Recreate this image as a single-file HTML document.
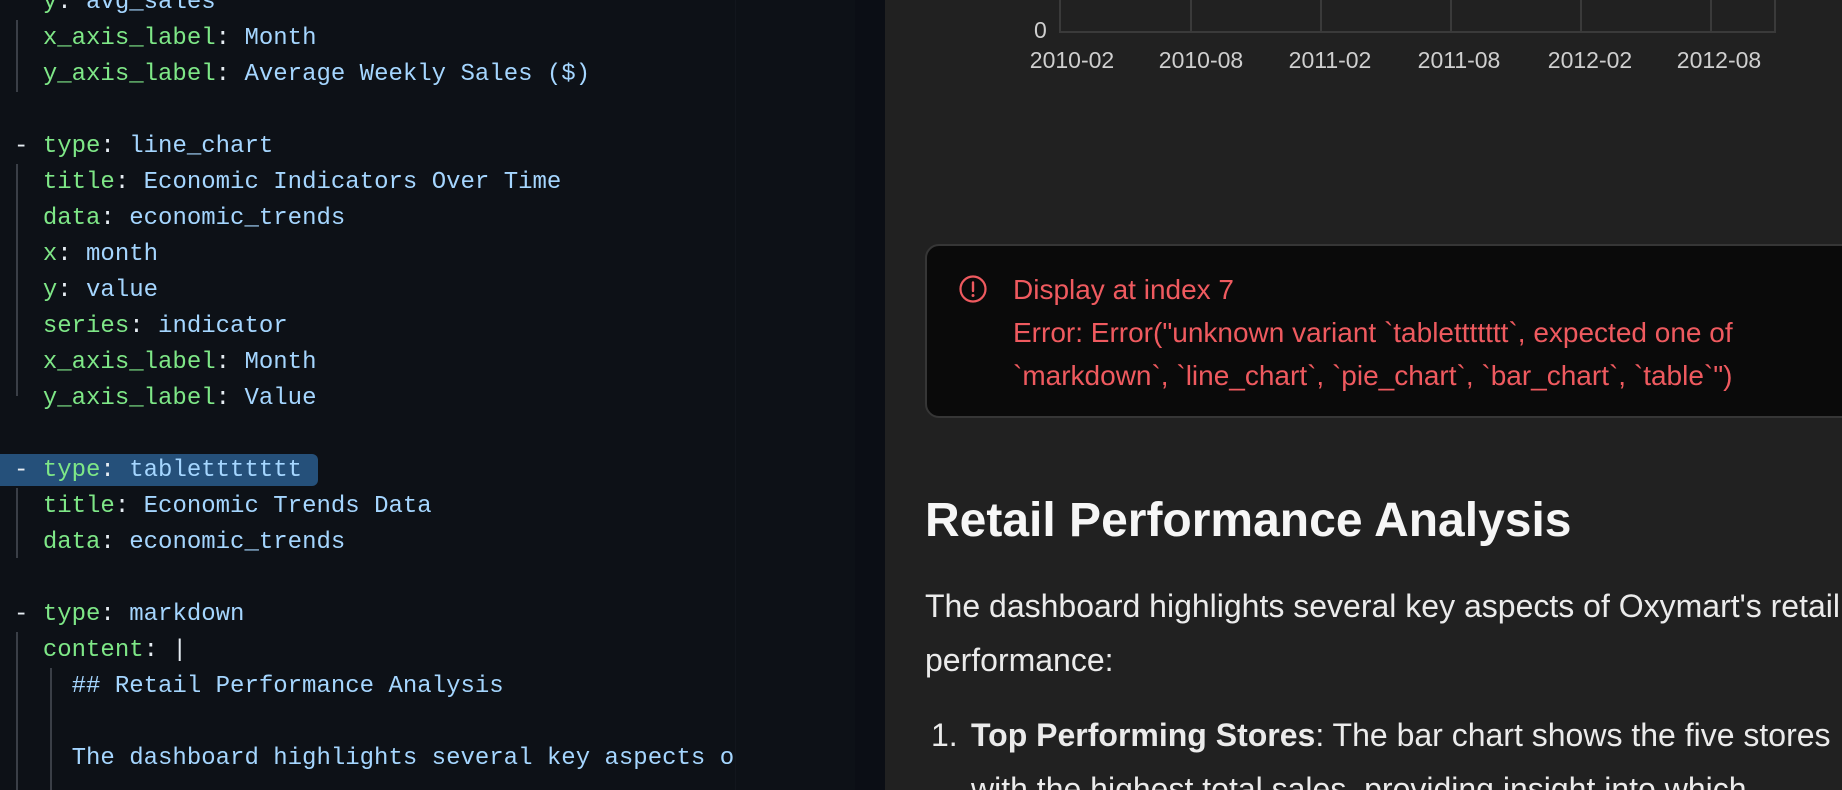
<!DOCTYPE html>
<html><head><meta charset="utf-8"><style>
*{margin:0;padding:0;box-sizing:border-box}
body{width:1842px;height:790px;overflow:hidden;background:#0d1117;position:relative;font-family:"Liberation Sans",Arial,sans-serif}
#ed{position:absolute;left:0;top:0;width:855px;height:790px;background:#0d1117;overflow:hidden}
#clip{position:absolute;left:0;top:0;width:735px;height:790px;overflow:hidden}
.ln{position:absolute;left:14px;height:36px;line-height:36px;font-family:"Liberation Mono","DejaVu Sans Mono",monospace;font-size:24px;white-space:pre;color:#e6edf3;margin-top:3px}
.k{color:#7ee787}.v{color:#a5d6ff}
.g{position:absolute;width:2px;background:#3a3f47}
#hl{position:absolute;left:0;top:454px;width:318px;height:32px;background:#25507a;border-radius:0 6px 6px 0}
#gut{position:absolute;left:855px;top:0;width:30px;height:790px;background:#0b0e15}
#rp{position:absolute;left:885px;top:0;width:957px;height:790px;background:#212121;overflow:hidden}
.gl{position:absolute;top:0;width:2px;height:33px;background:#3a3a3a}
.xl{position:absolute;top:47px;font-size:23px;color:#cfcfcf;transform:translateX(-50%);white-space:nowrap}
#err{position:absolute;left:40px;top:244px;width:1000px;height:174px;background:#0a0a0a;border:2px solid #363636;border-radius:14px}
.et{position:absolute;left:86px;font-size:28px;color:#ef5a5f;white-space:nowrap}
h2{position:absolute;left:40px;top:493px;font-size:48px;font-weight:bold;color:#f6f6f6;white-space:nowrap}
.p{position:absolute;font-size:32px;color:#ebebeb;white-space:nowrap}
</style></head><body>
<div id="ed">
<div id="clip">
<div id="hl"></div>
<div class="g" style="left:16px;top:20px;height:72px"></div>
<div class="g" style="left:16px;top:164px;height:232px"></div>
<div class="g" style="left:16px;top:488px;height:70px"></div>
<div class="g" style="left:16px;top:632px;height:160px"></div>
<div class="g" style="left:50px;top:668px;height:124px"></div>
<div class="ln" style="top:-18px">  <span class="k">y</span>: <span class="v">avg_sales</span></div>
<div class="ln" style="top:18px">  <span class="k">x_axis_label</span>: <span class="v">Month</span></div>
<div class="ln" style="top:54px">  <span class="k">y_axis_label</span>: <span class="v">Average Weekly Sales ($)</span></div>
<div class="ln" style="top:126px">- <span class="k">type</span>: <span class="v">line_chart</span></div>
<div class="ln" style="top:162px">  <span class="k">title</span>: <span class="v">Economic Indicators Over Time</span></div>
<div class="ln" style="top:198px">  <span class="k">data</span>: <span class="v">economic_trends</span></div>
<div class="ln" style="top:234px">  <span class="k">x</span>: <span class="v">month</span></div>
<div class="ln" style="top:270px">  <span class="k">y</span>: <span class="v">value</span></div>
<div class="ln" style="top:306px">  <span class="k">series</span>: <span class="v">indicator</span></div>
<div class="ln" style="top:342px">  <span class="k">x_axis_label</span>: <span class="v">Month</span></div>
<div class="ln" style="top:378px">  <span class="k">y_axis_label</span>: <span class="v">Value</span></div>
<div class="ln" style="top:450px">- <span class="k">type</span>: <span class="v">tablettttttt</span></div>
<div class="ln" style="top:486px">  <span class="k">title</span>: <span class="v">Economic Trends Data</span></div>
<div class="ln" style="top:522px">  <span class="k">data</span>: <span class="v">economic_trends</span></div>
<div class="ln" style="top:594px">- <span class="k">type</span>: <span class="v">markdown</span></div>
<div class="ln" style="top:630px">  <span class="k">content</span>: |</div>
<div class="ln" style="top:666px">    <span class="v">## Retail Performance Analysis</span></div>
<div class="ln" style="top:738px">    <span class="v">The dashboard highlights several key aspects of Oxymart's retail</span></div>
</div>
<div style="position:absolute;left:735px;top:0;width:1px;height:790px;background:#12161d"></div>
</div>
<div id="gut"></div>
<div id="rp">
<div style="position:absolute;left:149px;top:17px;font-size:23px;color:#cfcfcf">0</div>
<div style="position:absolute;left:174px;top:31px;width:717px;height:2px;background:#3a3a3a"></div>
<div class="gl" style="left:174px"></div><div class="gl" style="left:305px"></div><div class="gl" style="left:435px"></div><div class="gl" style="left:565px"></div><div class="gl" style="left:695px"></div><div class="gl" style="left:825px"></div><div class="gl" style="left:889px"></div>
<div class="xl" style="left:187px">2010-02</div>
<div class="xl" style="left:316px">2010-08</div>
<div class="xl" style="left:445px">2011-02</div>
<div class="xl" style="left:574px">2011-08</div>
<div class="xl" style="left:705px">2012-02</div>
<div class="xl" style="left:834px">2012-08</div>
<div id="err">
<svg style="position:absolute;left:31px;top:28px" width="30" height="30" viewBox="0 0 30 30"><circle cx="15" cy="15" r="12.5" fill="none" stroke="#ef5a5f" stroke-width="2.2"/><line x1="15" y1="8.5" x2="15" y2="17" stroke="#ef5a5f" stroke-width="2.4" stroke-linecap="round"/><circle cx="15" cy="21.5" r="1.5" fill="#ef5a5f"/></svg>
<div class="et" style="top:28px">Display at index 7</div>
<div class="et" style="top:71px">Error: Error("unknown variant `tablettttttt`, expected one of</div>
<div class="et" style="top:114px">`markdown`, `line_chart`, `pie_chart`, `bar_chart`, `table`")</div>
</div>
<h2>Retail Performance Analysis</h2>
<div class="p" style="left:40px;top:588px">The dashboard highlights several key aspects of Oxymart's retail</div>
<div class="p" style="left:40px;top:642px">performance:</div>
<div class="p" style="left:46px;top:717px">1.</div>
<div class="p" style="left:86px;top:717px"><b>Top Performing Stores</b>: The bar chart shows the five stores</div>
<div class="p" style="left:86px;top:771px">with the highest total sales, providing insight into which</div>
</div>
</body></html>
